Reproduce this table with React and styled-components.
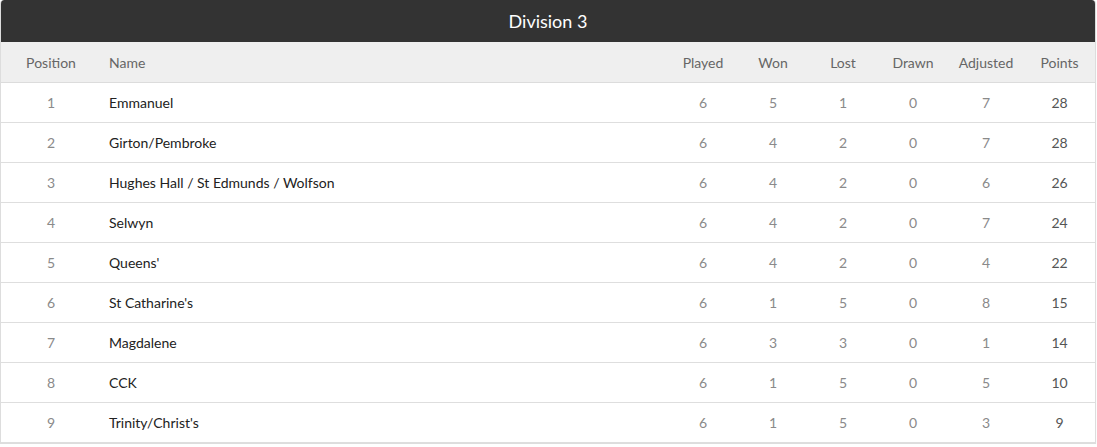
import React from 'react';
import styled, { createGlobalStyle } from 'styled-components';

const GlobalStyle = createGlobalStyle`
  body {
    margin: 0;
    background: #fff;
    font-family: "Lato", "Open Sans", sans-serif;
  }
`;

const rows = [
  [1, 'Emmanuel', 6, 5, 1, 0, 7, 28],
  [2, 'Girton/Pembroke', 6, 4, 2, 0, 7, 28],
  [3, 'Hughes Hall / St Edmunds / Wolfson', 6, 4, 2, 0, 6, 26],
  [4, 'Selwyn', 6, 4, 2, 0, 7, 24],
  [5, "Queens'", 6, 4, 2, 0, 4, 22],
  [6, "St Catharine's", 6, 1, 5, 0, 8, 15],
  [7, 'Magdalene', 6, 3, 3, 0, 1, 14],
  [8, 'CCK', 6, 1, 5, 0, 5, 10],
  [9, "Trinity/Christ's", 6, 1, 5, 0, 3, 9],
];

const columns = [
  { label: 'Position', width: 100 },
  { label: 'Name', width: 567, left: true },
  { label: 'Played', width: 70 },
  { label: 'Won', width: 70 },
  { label: 'Lost', width: 70 },
  { label: 'Drawn', width: 70 },
  { label: 'Adjusted', width: 76 },
  { label: 'Points', width: 71 },
];

const App = () => {
  return (
    <>
      <GlobalStyle />
      <Panel>
        <Title>Division 3</Title>
        <Table>
          <colgroup>
            {columns.map((c) => (
              <col key={c.label} style={{ width: c.width }} />
            ))}
          </colgroup>
          <thead>
            <tr>
              {columns.map((c) => (
                <HeadCell key={c.label} $left={c.left}>{c.label}</HeadCell>
              ))}
            </tr>
          </thead>
          <tbody>
            {rows.map((r) => (
              <Row key={r[0]}>
                <NumCell>{r[0]}</NumCell>
                <NameCell>{r[1]}</NameCell>
                {r.slice(2).map((v, i) => (
                  <NumCell key={i} $strong={i === 5}>{v}</NumCell>
                ))}
              </Row>
            ))}
          </tbody>
        </Table>
      </Panel>
    </>
  );
};

export default App;

const Panel = styled.div`
  width: 1096px;
  border: 1px solid #ddd;
  border-top: none;
  border-radius: 4px 4px 0 0;
  overflow: hidden;
  box-sizing: border-box;
  box-shadow: 0 1px 2px rgba(0, 0, 0, 0.06);
`;

const Title = styled.div`
  height: 42px;
  background: #333;
  color: #fff;
  font-size: 18px;
  display: flex;
  align-items: center;
  justify-content: center;
  border-radius: 4px 4px 0 0;
  margin: 0 -1px;
`;

const Table = styled.table`
  width: 100%;
  border-collapse: collapse;
  table-layout: fixed;
`;

const HeadCell = styled.th`
  height: 40px;
  padding: 0 0 0 ${(p) => (p.$left ? '8px' : '0')};
  background: #efefef;
  border-bottom: 1px solid #dcdcdc;
  color: #666;
  font-size: 14px;
  font-weight: 400;
  text-align: ${(p) => (p.$left ? 'left' : 'center')};
`;

const Row = styled.tr`
  height: 40px;
  border-bottom: 1px solid #dedede;
`;

const NumCell = styled.td`
  padding: 0;
  text-align: center;
  font-size: 14px;
  font-weight: 400;
  color: ${(p) => (p.$strong ? '#555' : '#8a8a8a')};
`;

const NameCell = styled.td`
  padding: 0 0 0 8px;
  text-align: left;
  font-size: 14px;
  font-weight: 400;
  color: #222;
`;
